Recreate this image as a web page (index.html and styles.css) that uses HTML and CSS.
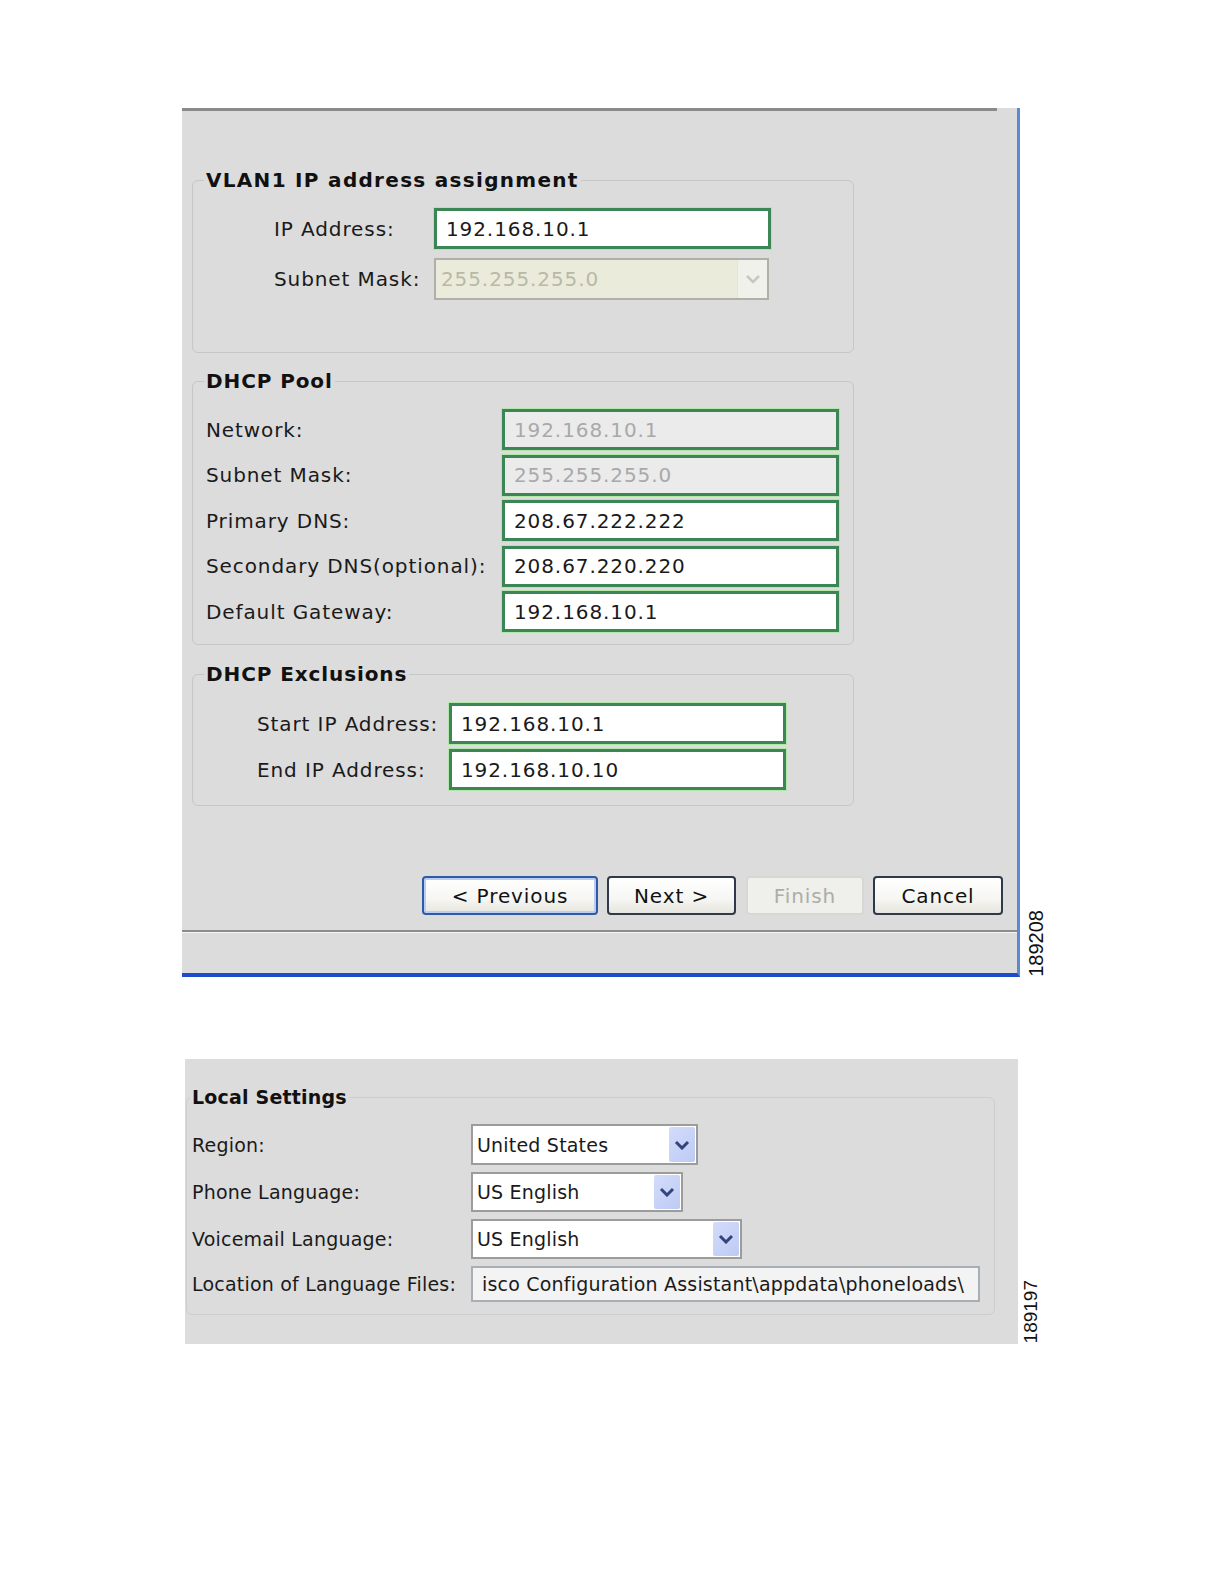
FILE: index.html
```html
<!DOCTYPE html>
<html lang="en">
<head>
<meta charset="utf-8">
<title>Wizard settings</title>
<link rel="stylesheet" href="styles.css">
</head>
<body>
<div class="page">
  <div class="fig fig1">
    <div class="window">
      <div class="topbar"></div>

      <fieldset class="group g1">
        <legend>VLAN1 IP address assignment</legend>
        <div class="rows">
          <div class="row">
            <span class="label">IP Address:</span>
            <div class="field green">192.168.10.1</div>
          </div>
          <div class="row">
            <span class="label">Subnet Mask:</span>
            <div class="select disabled">
              <span class="sel-text">255.255.255.0</span>
              <span class="arrow dis-arrow"><svg width="16" height="10" viewBox="0 0 16 10"><path d="M2 2 L8 8 L14 2" fill="none" stroke="#c8c8c0" stroke-width="2.6"/></svg></span>
            </div>
          </div>
        </div>
      </fieldset>

      <fieldset class="group g2">
        <legend>DHCP Pool</legend>
        <div class="rows">
          <div class="row">
            <span class="label">Network:</span>
            <div class="field green off">192.168.10.1</div>
          </div>
          <div class="row">
            <span class="label">Subnet Mask:</span>
            <div class="field green off">255.255.255.0</div>
          </div>
          <div class="row">
            <span class="label">Primary DNS:</span>
            <div class="field green">208.67.222.222</div>
          </div>
          <div class="row">
            <span class="label">Secondary DNS(optional):</span>
            <div class="field green">208.67.220.220</div>
          </div>
          <div class="row">
            <span class="label">Default Gateway:</span>
            <div class="field green">192.168.10.1</div>
          </div>
        </div>
      </fieldset>

      <fieldset class="group g3">
        <legend>DHCP Exclusions</legend>
        <div class="rows">
          <div class="row">
            <span class="label">Start IP Address:</span>
            <div class="field green">192.168.10.1</div>
          </div>
          <div class="row">
            <span class="label">End IP Address:</span>
            <div class="field green">192.168.10.10</div>
          </div>
        </div>
      </fieldset>

      <div class="buttons">
        <button class="btn btn-default b-prev">&lt; Previous</button>
        <button class="btn b-next">Next &gt;</button>
        <button class="btn btn-off b-finish">Finish</button>
        <button class="btn b-cancel">Cancel</button>
      </div>

      <div class="separator"></div>
      <div class="status"></div>
    </div>
    <div class="figno figno1">189208</div>
  </div>

  <div class="fig fig2">
    <div class="panel">
      <fieldset class="group g4">
        <legend>Local Settings</legend>
        <div class="rows">
          <div class="row">
            <span class="label">Region:</span>
            <div class="select blue s1">
              <span class="sel-text">United States</span>
              <span class="arrow blue-arrow"><svg width="16" height="10" viewBox="0 0 16 10"><path d="M2 2 L8 8 L14 2" fill="none" stroke="#34437a" stroke-width="3"/></svg></span>
            </div>
          </div>
          <div class="row">
            <span class="label">Phone Language:</span>
            <div class="select blue s2">
              <span class="sel-text">US English</span>
              <span class="arrow blue-arrow"><svg width="16" height="10" viewBox="0 0 16 10"><path d="M2 2 L8 8 L14 2" fill="none" stroke="#34437a" stroke-width="3"/></svg></span>
            </div>
          </div>
          <div class="row">
            <span class="label">Voicemail Language:</span>
            <div class="select blue s3">
              <span class="sel-text">US English</span>
              <span class="arrow blue-arrow"><svg width="16" height="10" viewBox="0 0 16 10"><path d="M2 2 L8 8 L14 2" fill="none" stroke="#34437a" stroke-width="3"/></svg></span>
            </div>
          </div>
          <div class="row">
            <span class="label">Location of Language Files:</span>
            <div class="path-field">isco Configuration Assistant\appdata\phoneloads\</div>
          </div>
        </div>
      </fieldset>
    </div>
    <div class="figno figno2">189197</div>
  </div>
</div>
</body>
</html>
```

FILE: styles.css
```css
* { box-sizing: border-box; }

body {
  margin: 0;
  background: #ffffff;
  font-family: "DejaVu Sans", Verdana, sans-serif;
  color: #1a1a1a;
}

.page {
  padding-top: 108px;
}

.fig {
  display: flex;
  align-items: flex-end;
}

.fig1 {
  margin-left: 182px;
}

.window {
  width: 838px;
  background: #dcdcdc;
  border-right: 3px solid #5a8ad6;
  border-bottom: 4px solid #1c4ccc;
  font-size: 20px;
  letter-spacing: 0.9px;
}

.topbar {
  height: 3px;
  background: #8a8a8a;
  margin-right: 20px;
}

/* group boxes */
.group {
  margin: 0 0 0 10px;
  width: 662px;
  border: 1px solid #c6c6c6;
  border-radius: 6px;
  padding: 0;
  min-width: 0;
}

.group legend {
  font-weight: bold;
  line-height: 24px;
  padding: 0 2px;
  margin-left: 11px;
  color: #111;
}

.g1 legend { letter-spacing: 1.3px; }

.rows {
  display: flex;
  flex-direction: column;
}

.row {
  display: flex;
  align-items: center;
}

.label {
  flex: none;
  white-space: nowrap;
}

.g1 { margin-top: 57px; padding: 16px 0 52px 0; }
.g1 .rows { gap: 9px; padding-left: 81px; }
.g1 .label { width: 160px; }
.g1 .select { width: 335px; height: 42px; }

.g2 { margin-top: 16px; padding: 16px 0 12px 0; }
.g2 .rows { gap: 4.6px; padding-left: 13px; }
.g2 .label { width: 296px; }

.g3 { margin-top: 17px; padding: 17px 0 15px 0; }
.g3 .rows { gap: 5px; padding-left: 64px; }
.g3 .label { width: 192px; }

/* text fields */
.field {
  width: 337px;
  height: 41px;
  display: flex;
  align-items: center;
  padding-left: 9px;
  background: #ffffff;
  white-space: nowrap;
}

.green {
  border: 3px solid #3c8656;
  box-shadow: 0 0 0 1px #b4e6ac;
}

.off {
  background: #ebebeb;
  color: #a9a9a9;
}

/* selects */
.select {
  display: flex;
  align-items: stretch;
  border: 2px solid #a6a6a6;
  background: #ffffff;
}

.sel-text {
  flex: 1;
  display: flex;
  align-items: center;
  padding-left: 5px;
  white-space: nowrap;
  overflow: hidden;
}

.arrow {
  flex: none;
  width: 30px;
  display: flex;
  align-items: center;
  justify-content: center;
}

.disabled {
  background: #ebebdc;
  color: #b9b9a6;
  border-color: #b0b0a8;
}

.dis-arrow {
  background: #f1f1ec;
  border-left: 1px solid #e4e4dc;
}

/* buttons */
.buttons {
  display: flex;
  justify-content: flex-end;
  gap: 9px;
  margin-top: 70px;
  padding-right: 14px;
}

.btn {
  height: 39px;
  font-family: "DejaVu Sans", Verdana, sans-serif;
  font-size: 20px;
  letter-spacing: 0.9px;
  color: #111;
  background: linear-gradient(#ffffff 0%, #f6f6f3 60%, #e6e5de 100%);
  border: 2px solid #2e3a4c;
  border-radius: 4px;
  padding: 0;
}

.btn-default {
  border-color: #2f5aa6;
  box-shadow: inset 0 0 0 2px #b9cdf2;
}

.btn-off {
  color: #adada6;
  border-color: #d8d8d2;
  background: #efefeb;
}

.b-prev { width: 176px; }
.b-next { width: 129px; }
.b-finish { width: 118px; margin-left: 1px; }
.b-cancel { width: 130px; }

.separator {
  margin-top: 15px;
  height: 3px;
  border-top: 2px solid #8c8c8c;
  border-bottom: 1px solid #f4f4f4;
}

.status {
  height: 40px;
}

/* figure numbers */
.figno {
  writing-mode: vertical-rl;
  transform: rotate(180deg);
  font-family: "Liberation Sans", Arial, sans-serif;
  color: #111;
  line-height: 20px;
}

.figno1 {
  font-size: 20px;
  margin-left: 6px;
  margin-bottom: 1px;
}

.figno2 {
  font-size: 19px;
  margin-left: 3px;
  margin-bottom: 1px;
}

/* figure 2 */
.fig2 {
  margin-top: 82px;
  margin-left: 185px;
}

.panel {
  width: 833px;
  background: #dcdcdc;
  padding: 27px 0 29px 1px;
  font-size: 19px;
  letter-spacing: 0.2px;
}

.g4 {
  margin: 0;
  width: 809px;
  padding: 16px 0 12px 0;
  border-color: #cdcdcd;
}

.g4 legend {
  line-height: 22px;
  margin-left: 3px;
}

.g4 .rows { gap: 7px; padding-left: 5px; }
.g4 .label { width: 279px; }

.blue {
  border: 2px solid #9c9c9c;
  height: 40px;
}

.s1 { width: 227px; height: 41px; }
.s2 { width: 212px; }
.s3 { width: 271px; }

.blue .sel-text { padding-left: 4px; }

.blue-arrow {
  width: 26px;
  margin: 1px;
  background: linear-gradient(135deg, #d4dcfa 0%, #bccaf4 100%);
  border-radius: 2px;
}

.path-field {
  width: 509px;
  height: 36px;
  border: 2px solid #a8aeb4;
  background: #f3f3f3;
  display: flex;
  align-items: center;
  padding-left: 9px;
  white-space: nowrap;
  overflow: hidden;
}
```
